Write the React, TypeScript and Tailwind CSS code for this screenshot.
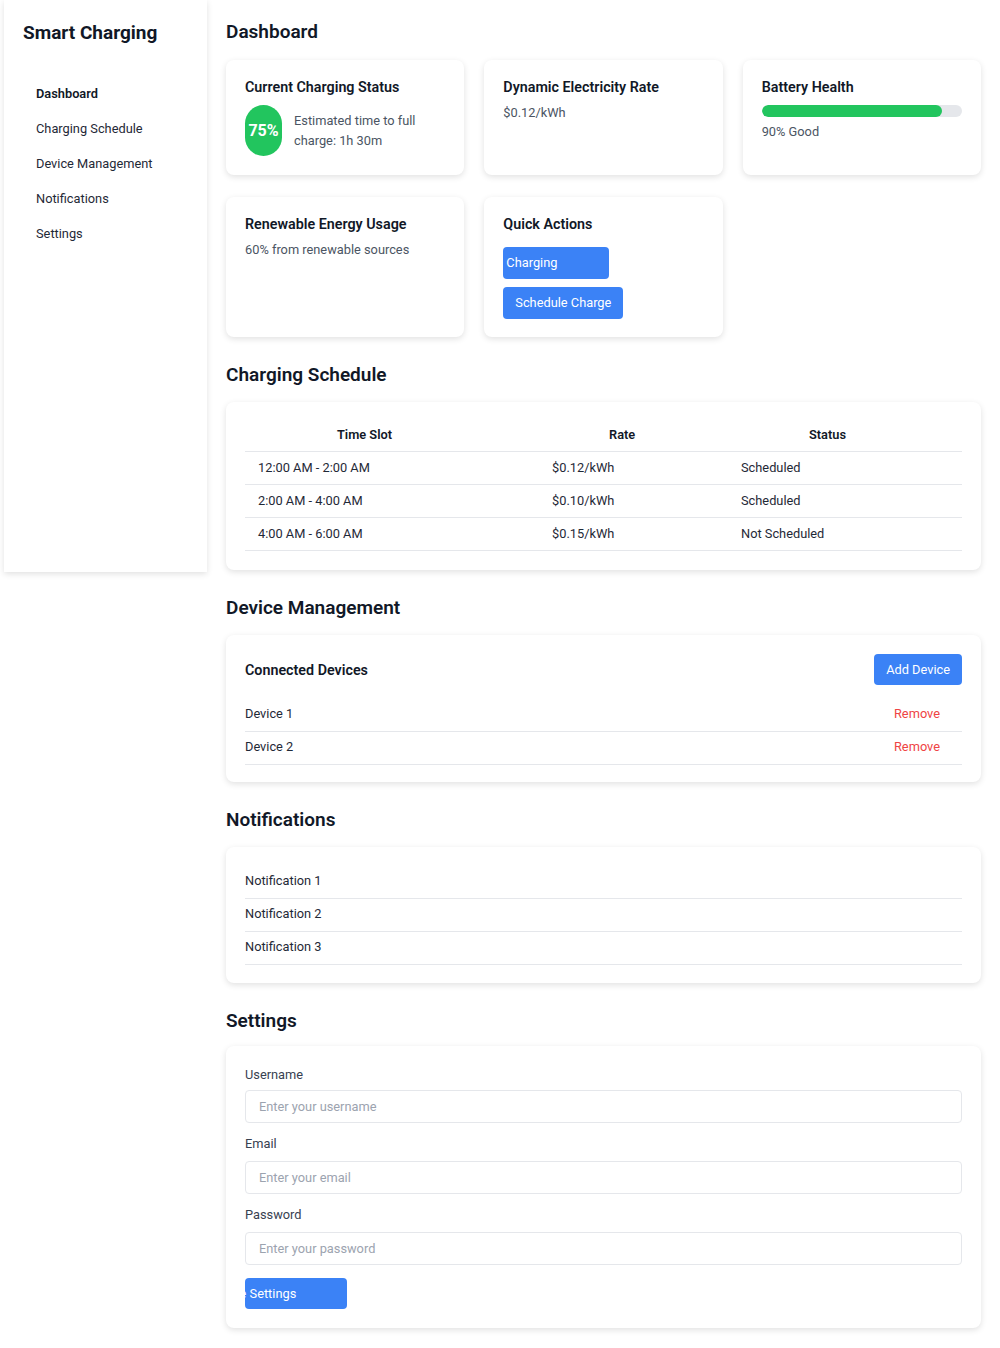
import React from 'react';

const navItems = ['Dashboard', 'Charging Schedule', 'Device Management', 'Notifications', 'Settings'];

const schedule = [
  { slot: '12:00 AM - 2:00 AM', rate: '$0.12/kWh', status: 'Scheduled' },
  { slot: '2:00 AM - 4:00 AM', rate: '$0.10/kWh', status: 'Scheduled' },
  { slot: '4:00 AM - 6:00 AM', rate: '$0.15/kWh', status: 'Not Scheduled' },
];

const devices = ['Device 1', 'Device 2'];
const notifications = ['Notification 1', 'Notification 2', 'Notification 3'];

const Card: React.FC<{ className?: string; children: React.ReactNode }> = ({ className = '', children }) => (
  <div className={`bg-white rounded-lg shadow-[0_2px_6px_rgba(0,0,0,0.12)] ${className}`}>{children}</div>
);

const SectionTitle: React.FC<{ className?: string; children: React.ReactNode }> = ({ className = 'mb-[13px]', children }) => (
  <h2 className={`text-[19px] leading-7 font-semibold text-[#111827] ${className}`}>{children}</h2>
);

const CardTitle: React.FC<{ children: React.ReactNode }> = ({ children }) => (
  <h3 className="text-[14.3px] leading-5 font-semibold text-[#111827]">{children}</h3>
);

const Field: React.FC<{ label: string; placeholder: string; type?: string; first?: boolean }> = ({
  label,
  placeholder,
  type = 'text',
  first,
}) => (
  <div className={first ? '' : 'mt-[11px]'}>
    <label className={`block text-[12.8px] leading-5 text-[#374151] ${first ? 'mb-[5px]' : 'mb-[7px]'}`}>{label}</label>
    <input
      type={type}
      placeholder={placeholder}
      className="w-full h-[33px] border border-[#e5e7eb] rounded px-[13px] text-[12.8px] text-[#1f2937] placeholder:text-[#9ca3af] outline-none"
    />
  </div>
);

export default function App() {
  return (
    <div className="flex min-h-[1348px] bg-white font-['Roboto',sans-serif]">
      {/* Sidebar */}
      <aside className="ml-1 w-[203px] h-[572px] shrink-0 bg-white shadow-[0_2px_6px_rgba(0,0,0,0.12)] px-[19px] pt-[19px]">
        <h1 className="text-[19px] leading-7 font-bold text-[#111827]">Smart Charging</h1>
        <nav className="mt-[29px] flex flex-col">
          {navItems.map((item, i) => (
            <a
              key={item}
              href="#"
              className={`px-[13px] h-[35px] flex items-center text-[12.8px] ${
                i === 0 ? 'font-semibold text-[#111827]' : 'text-[#1f2937]'
              }`}
            >
              {item}
            </a>
          ))}
        </nav>
      </aside>

      <main className="flex-1 pl-[19px] pr-[19px] pt-[18px] pb-10">
        {/* Dashboard */}
        <section>
          <SectionTitle className="mb-[14px]">Dashboard</SectionTitle>
          <div className="grid grid-cols-3 gap-x-5 gap-y-[22px]">
            <Card className="px-[19px] pt-[17px] pb-[19px]">
              <CardTitle>Current Charging Status</CardTitle>
              <div className="mt-2 flex items-center gap-3">
                <div className="w-[37px] h-[51px] shrink-0 rounded-full bg-[#22c55e] flex items-center justify-center text-white font-bold text-[16px]">
                  75%
                </div>
                <p className="text-[12.8px] leading-5 text-[#4b5563]">Estimated time to full charge: 1h 30m</p>
              </div>
            </Card>
            <Card className="px-[19px] pt-[17px] pb-[19px]">
              <CardTitle>Dynamic Electricity Rate</CardTitle>
              <p className="mt-1.5 text-[12.8px] leading-5 text-[#4b5563]">$0.12/kWh</p>
            </Card>
            <Card className="px-[19px] pt-[17px] pb-[19px]">
              <CardTitle>Battery Health</CardTitle>
              <div className="mt-2 h-3 w-full rounded-full bg-[#e5e7eb] overflow-hidden">
                <div className="h-full rounded-full bg-[#22c55e]" style={{ width: '90%' }} />
              </div>
              <p className="mt-[5px] text-[12.8px] leading-5 text-[#4b5563]">90% Good</p>
            </Card>
            <Card className="px-[19px] pt-[17px] pb-[19px]">
              <CardTitle>Renewable Energy Usage</CardTitle>
              <p className="mt-1.5 text-[12.8px] leading-5 text-[#4b5563]">60% from renewable sources</p>
            </Card>
            <Card className="px-[19px] pt-[17px] pb-[18px]">
              <CardTitle>Quick Actions</CardTitle>
              <div className="mt-[13px] flex flex-col items-start gap-2">
                <button className="w-[106px] h-8 rounded bg-[#3b82f6] text-white text-[12.8px] text-left pl-[3px]">
                  Charging
                </button>
                <button className="h-8 rounded bg-[#3b82f6] text-white text-[12.8px] px-3">Schedule Charge</button>
              </div>
            </Card>
          </div>
        </section>

        {/* Charging Schedule */}
        <section className="mt-6">
          <SectionTitle>Charging Schedule</SectionTitle>
          <Card className="p-[19px]">
            <div className="grid grid-cols-[294px_189px_1fr] h-[31px] pb-[2px] items-center border-b border-[#e5e7eb] text-[12.8px] font-semibold text-[#111827]">
              <div className="pl-[92px]">Time Slot</div>
              <div className="pl-[70px]">Rate</div>
              <div className="pl-[81px]">Status</div>
            </div>
            {schedule.map(row => (
              <div
                key={row.slot}
                className="grid grid-cols-[294px_189px_1fr] h-[33px] items-center border-b border-[#e5e7eb] text-[12.8px] text-[#1f2937]"
              >
                <div className="pl-[13px]">{row.slot}</div>
                <div className="pl-[13px]">{row.rate}</div>
                <div className="pl-[13px]">{row.status}</div>
              </div>
            ))}
          </Card>
        </section>

        {/* Device Management */}
        <section className="mt-6">
          <SectionTitle>Device Management</SectionTitle>
          <Card className="px-[19px] pt-[19px] pb-[17px]">
            <div className="flex items-center justify-between mb-[14px]">
              <CardTitle>Connected Devices</CardTitle>
              <button className="h-[31px] px-3 rounded bg-[#3b82f6] text-white text-[12.8px]">Add Device</button>
            </div>
            {devices.map(d => (
              <div key={d} className="flex items-center justify-between h-[33px] pb-[2px] border-b border-[#e5e7eb] text-[12.8px]">
                <span className="text-[#1f2937]">{d}</span>
                <button className="text-[#ef4444] pr-[22px]">Remove</button>
              </div>
            ))}
          </Card>
        </section>

        {/* Notifications */}
        <section className="mt-6">
          <SectionTitle>Notifications</SectionTitle>
          <Card className="px-[19px] pt-[19px] pb-[18px]">
            {notifications.map(n => (
              <div key={n} className="flex items-center h-[33px] pb-[2px] border-b border-[#e5e7eb] text-[12.8px] text-[#1f2937]">
                {n}
              </div>
            ))}
          </Card>
        </section>

        {/* Settings */}
        <section className="mt-6">
          <SectionTitle className="mb-[11px]">Settings</SectionTitle>
          <Card className="p-[19px]">
            <Field first label="Username" placeholder="Enter your username" />
            <Field label="Email" placeholder="Enter your email" type="email" />
            <Field label="Password" placeholder="Enter your password" type="password" />
            <button className="mt-[13px] w-[102px] h-[31px] rounded bg-[#3b82f6] text-white text-[12.8px] overflow-hidden text-left">
              <span className="block whitespace-nowrap ml-[-26px]">Save Settings</span>
            </button>
          </Card>
        </section>
      </main>
    </div>
  );
}
